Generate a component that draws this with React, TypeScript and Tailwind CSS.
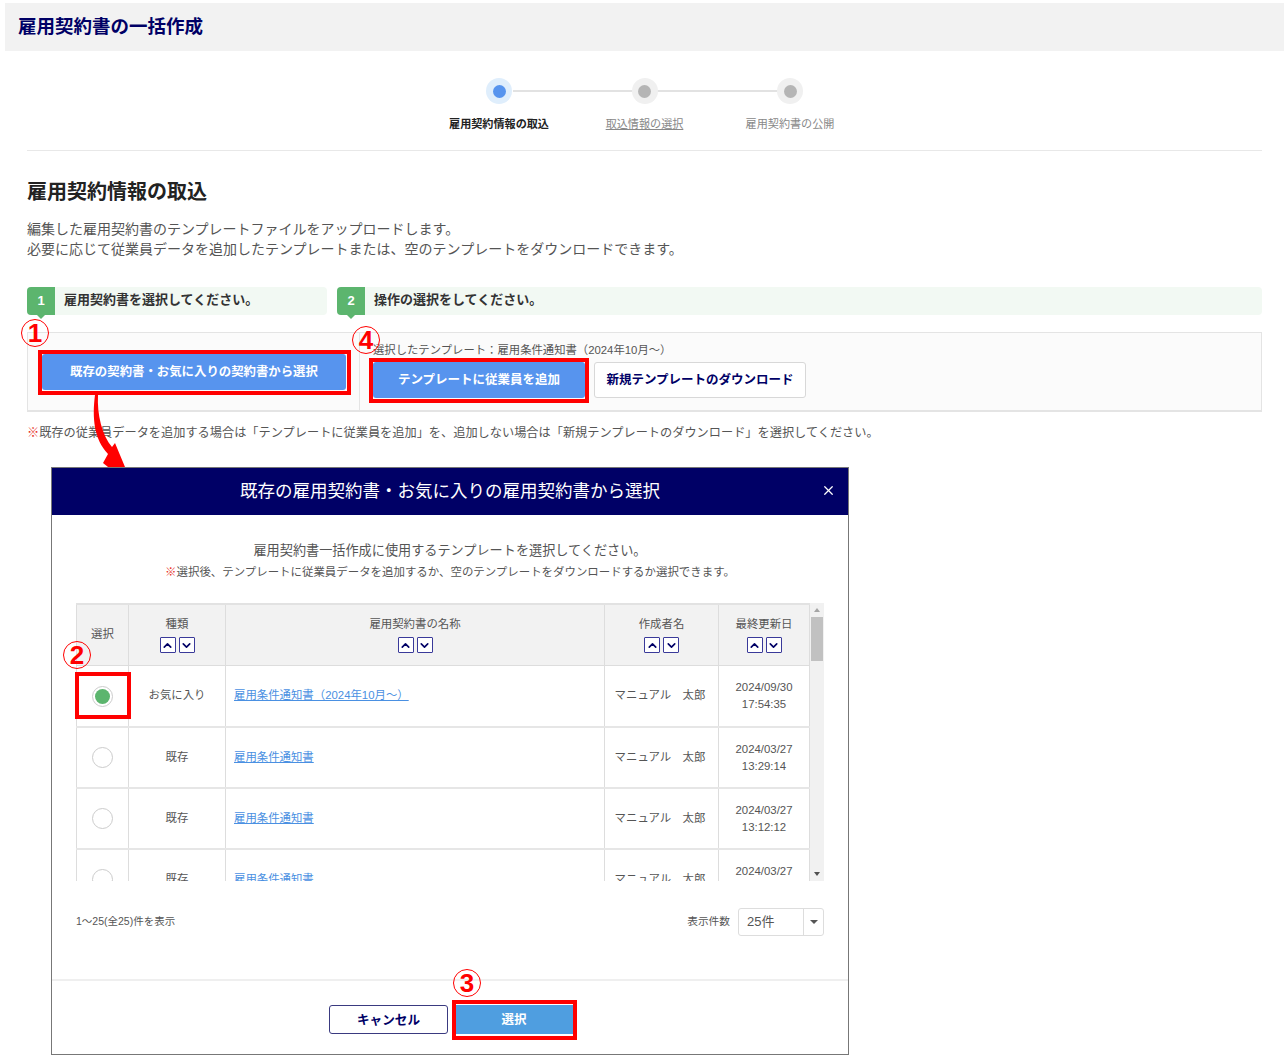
import { ChevronDown, ChevronUp, X } from "lucide-react";

const rows = [
  { kind: "お気に入り", name: "雇用条件通知書（2024年10月～）", date: "2024/09/30", time: "17:54:35", checked: true, h: "h-[62px]" },
  { kind: "既存", name: "雇用条件通知書", date: "2024/03/27", time: "13:29:14", checked: false, h: "h-[61px]" },
  { kind: "既存", name: "雇用条件通知書", date: "2024/03/27", time: "13:12:12", checked: false, h: "h-[61px]" },
  { kind: "既存", name: "雇用条件通知書", date: "2024/03/27", time: "13:05:40", checked: false, h: "h-[61px]" },
];

function SortButtons() {
  return (
    <div className="flex justify-center gap-[3px] mt-[5px]">
      <span className="w-[16px] h-[16px] border border-[#3a3a9a] rounded-[1px] bg-white flex items-center justify-center text-[#000066]">
        <ChevronUp size={13} strokeWidth={3} />
      </span>
      <span className="w-[16px] h-[16px] border border-[#3a3a9a] rounded-[1px] bg-white flex items-center justify-center text-[#000066]">
        <ChevronDown size={13} strokeWidth={3} />
      </span>
    </div>
  );
}

function Callout({ n, className }: { n: number; className: string }) {
  return (
    <div
      className={`absolute w-[28px] h-[28px] rounded-full border border-[#ff0000] flex items-center justify-center text-[#ff0000] font-bold text-[26px] leading-none ${className}`}
    >
      {n}
    </div>
  );
}

function StepHead({ n, label, className }: { n: number; label: string; className: string }) {
  return (
    <div className={`h-[28px] bg-[#f2f9f3] rounded-[4px] flex items-center ${className}`}>
      <div className="relative w-[28px] h-[28px] bg-[#5cb56e] rounded-l-[4px] text-white text-[13px] font-bold flex items-center justify-center">
        {n}
        <span className="absolute left-[10px] top-[28px] border-x-[4px] border-t-[4px] border-x-transparent border-t-[#5cb56e]" />
      </div>
      <span className="ml-[9px] pb-[2px] text-[13px] font-bold text-[#333333]">{label}</span>
    </div>
  );
}

function Step({ label, active, link }: { label: string; active?: boolean; link?: boolean }) {
  return (
    <div className="w-[145.5px] flex flex-col items-center">
      <div className={`w-[26px] h-[26px] rounded-full flex items-center justify-center ${active ? "bg-[#dfeefc]" : "bg-[#f0f0f0]"}`}>
        <div className={`w-[13px] h-[13px] rounded-full ${active ? "bg-[#5794ee]" : "bg-[#b5b5b5]"}`} />
      </div>
      <div
        className={`mt-[12px] text-[11.1px] leading-[16px] ${active ? "font-bold text-[#222222]" : "text-[#888888]"} ${link ? "underline" : ""}`}
      >
        {label}
      </div>
    </div>
  );
}

export default function App() {
  return (
    <div className="relative w-[1284px] h-[1055px] overflow-hidden bg-white pt-[3px] pl-[5px] font-['Liberation_Sans','Noto_Sans_CJK_JP',sans-serif] text-[#555555]">
      <div className="h-[48px] bg-[#f2f2f2] flex items-center pl-[13px] text-[18.5px] font-bold text-[#000066]">
        雇用契約書の一括作成
      </div>

      <div className="pl-[22px] pr-[22px]">
        <div className="relative h-[100px] border-b border-[#e8e8e8] pt-[27px] flex justify-center">
          <div className="absolute left-[486px] top-[39px] w-[280px] h-[2px] bg-[#e2e2e2]" />
          <div className="relative flex">
            <Step label="雇用契約情報の取込" active />
            <Step label="取込情報の選択" link />
            <Step label="雇用契約書の公開" />
          </div>
        </div>

        <h2 className="mt-[28px] text-[20px] leading-[27px] font-bold text-[#222222]">雇用契約情報の取込</h2>
        <p className="mt-[13px] text-[14px] leading-[20px] text-[#555555]">
          編集した雇用契約書のテンプレートファイルをアップロードします。
          <br />
          必要に応じて従業員データを追加したテンプレートまたは、空のテンプレートをダウンロードできます。
        </p>

        <div className="mt-[28px] flex gap-[10px]">
          <StepHead n={1} label="雇用契約書を選択してください。" className="w-[300px]" />
          <StepHead n={2} label="操作の選択をしてください。" className="flex-1" />
        </div>

        <div className="mt-[17px] h-[80px] border-2 border-[#e4e4e4] border-t-[1px] border-x-[1px] bg-[#fbfbfb] flex">
          <div className="w-[332px] border-r border-[#e4e4e4] pl-[14px] pt-[21px]">
            <div className="w-[304px] h-[36px] bg-[#5794ee] rounded-[3px] flex items-center justify-center text-white text-[12.4px] font-bold">
              既存の契約書・お気に入りの契約書から選択
            </div>
          </div>
          <div className="pl-[13px] pt-[9px]">
            <div className="text-[11.35px] leading-[16px] text-[#555555]">選択したテンプレート：雇用条件通知書（2024年10月～）</div>
            <div className="mt-[4px] flex gap-[9px]">
              <div className="w-[212px] h-[36px] bg-[#5794ee] rounded-[3px] flex items-center justify-center text-white text-[12.5px] font-bold">
                テンプレートに従業員を追加
              </div>
              <div className="w-[212px] h-[36px] bg-white border border-[#d8d8d8] rounded-[3px] flex items-center justify-center text-[#000066] text-[12.5px] font-bold">
                新規テンプレートのダウンロード
              </div>
            </div>
          </div>
        </div>

        <p className="mt-[13px] text-[12.2px] leading-[16px] text-[#555555]">
          <span className="text-[#e8332a] font-bold">※</span>既存の従業員データを追加する場合は「テンプレートに従業員を追加」を、追加しない場合は「新規テンプレートのダウンロード」を選択してください。
        </p>
      </div>

      {/* modal pasted over the page */}
      <div className="absolute left-[51px] top-[467px] w-[798px] h-[588px] bg-white border border-[#777777] flex flex-col">
        <div className="relative h-[47px] shrink-0 bg-[#000066] flex items-center justify-center text-white text-[17.5px]">
          既存の雇用契約書・お気に入りの雇用契約書から選択
          <X size={15} strokeWidth={2} className="absolute right-[12px] top-[15px]" />
        </div>

        <div className="pt-[26px] text-center">
          <div className="text-[13.15px] leading-[20px] text-[#555555]">雇用契約書一括作成に使用するテンプレートを選択してください。</div>
          <div className="mt-[1px] text-[11.45px] leading-[20px] text-[#555555]">
            <span className="text-[#e8332a] font-bold">※</span>選択後、テンプレートに従業員データを追加するか、空のテンプレートをダウンロードするか選択できます。
          </div>
        </div>

        <div className="mt-[21px] mx-[24px] h-[278px] flex overflow-hidden">
          <div className="w-[734px] border-t-2 border-[#e2e2e2] text-[11.4px] text-[#555555]">
            <div className="h-[61px] flex bg-[#f2f2f2] border-b border-[#dddddd]">
              <div className="w-[53px] border-x border-[#dddddd] flex items-center justify-center">選択</div>
              <div className="w-[97px] border-r border-[#dddddd] pt-[11px] text-center leading-[16px]">
                種類
                <SortButtons />
              </div>
              <div className="w-[379px] border-r border-[#dddddd] pt-[11px] text-center leading-[16px]">
                雇用契約書の名称
                <SortButtons />
              </div>
              <div className="w-[114px] border-r border-[#dddddd] pt-[11px] text-center leading-[16px]">
                作成者名
                <SortButtons />
              </div>
              <div className="flex-1 border-r border-[#dddddd] pt-[11px] text-center leading-[16px]">
                最終更新日
                <SortButtons />
              </div>
            </div>
            {rows.map((row, i) => (
              <div key={i} className={`${row.h} flex border-b-2 border-[#e6e6e6]`}>
                <div className="w-[53px] border-x border-[#dddddd] flex items-center justify-center">
                  <span className="w-[21px] h-[21px] rounded-full border border-[#cccccc] bg-white flex items-center justify-center">
                    {row.checked && <span className="w-[15px] h-[15px] rounded-full bg-[#5cb56e]" />}
                  </span>
                </div>
                <div className="w-[97px] border-r border-[#dddddd] flex items-center justify-center">{row.kind}</div>
                <div className="w-[379px] border-r border-[#dddddd] flex items-center pl-[8px] text-[#4a90e2] underline">{row.name}</div>
                <div className="w-[114px] border-r border-[#dddddd] flex items-center justify-center pr-[3px]">マニュアル　太郎</div>
                <div className="flex-1 border-r border-[#dddddd] flex flex-col items-center justify-center leading-[17px]">
                  <span>{row.date}</span>
                  <span>{row.time}</span>
                </div>
              </div>
            ))}
          </div>
          <div className="w-[14px] bg-[#f1f1f1] flex flex-col items-center justify-between">
            <div className="w-full">
              <div className="h-[14px] flex items-center justify-center">
                <span className="border-x-[3px] border-b-[4px] border-x-transparent border-b-[#a5a5a5]" />
              </div>
              <div className="h-[44px] mx-px bg-[#c1c1c1]" />
            </div>
            <div className="h-[14px] flex items-center justify-center">
              <span className="border-x-[3px] border-t-[4px] border-x-transparent border-t-[#505050]" />
            </div>
          </div>
        </div>

        <div className="mt-[27px] mx-[24px] h-[27px] flex items-center justify-between text-[10.7px] text-[#555555]">
          <span className="text-[10.5px]">1～25(全25)件を表示</span>
          <div className="flex items-center gap-[8px]">
            <span>表示件数</span>
            <div className="w-[86px] h-[28px] border border-[#dddddd] rounded-[3px] flex items-center text-[13px]">
              <span className="flex-1 pl-[8px]">25件</span>
              <span className="w-[20px] h-full border-l border-[#dddddd] flex items-center justify-center">
                <span className="border-x-[4px] border-t-[4px] border-x-transparent border-t-[#555555]" />
              </span>
            </div>
          </div>
        </div>

        <div className="mt-[44px] flex-1 border-t-2 border-[#efefef] flex justify-center pt-[24px] pl-[3px] gap-[6px]">
          <div className="w-[119px] h-[29px] pt-px bg-white border border-[#3a3a80] rounded-[3px] flex items-center justify-center text-[#000066] text-[12.6px] font-bold">
            キャンセル
          </div>
          <div className="w-[120px] h-[29px] pt-px bg-[#4f9ee0] flex items-center justify-center text-white text-[12.5px] font-bold">
            選択
          </div>
        </div>
      </div>

      {/* annotations drawn on the screenshot */}
      <div className="absolute left-[38px] top-[350px] w-[313px] h-[45px] border-[4px] border-[#ff0000]" />
      <div className="absolute left-[369px] top-[358px] w-[220px] h-[45px] border-[4px] border-[#ff0000]" />
      <div className="absolute left-[75px] top-[672px] w-[56px] h-[47px] border-[4px] border-[#ff0000]" />
      <div className="absolute left-[452px] top-[1000px] w-[125px] h-[40px] border-[4px] border-[#ff0000]" />
      <Callout n={1} className="left-[21px] top-[319px]" />
      <Callout n={4} className="left-[352px] top-[326px]" />
      <Callout n={2} className="left-[63px] top-[641px]" />
      <Callout n={3} className="left-[453px] top-[969px]" />
      <svg className="absolute left-[85px] top-[393px]" width="50" height="76" viewBox="0 0 50 76">
        <path d="M10 2 C7 25 9 46 23 61 L18 70 L23 74 L40 74 L30 50 L27 54 C17 42 12 22 13 2 Z" fill="#ff0000" />
      </svg>
    </div>
  );
}
